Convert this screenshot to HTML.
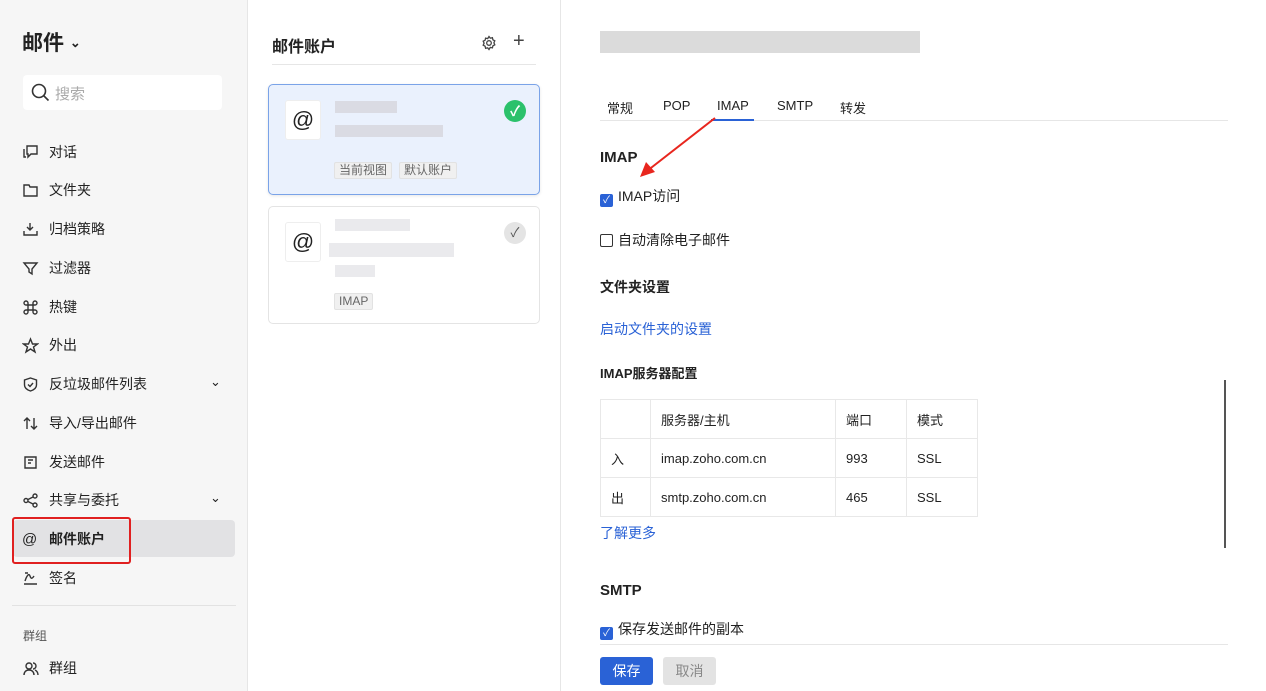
<!DOCTYPE html>
<html><head><meta charset="utf-8"><style>
*{box-sizing:border-box;margin:0;padding:0}
body{width:1266px;height:691px;overflow:hidden;background:#fff;font-family:"Liberation Sans","Noto Sans CJK SC",sans-serif;color:#222;position:relative;font-size:14px}
.abs{position:absolute}
.side{left:0;top:0;width:248px;height:691px;background:#f6f6f6;border-right:1px solid #e6e6e6}
.nav{position:absolute;left:22px;font-size:14px;color:#222;display:flex;align-items:center;gap:10px}
.nav svg{width:17px;height:17px;stroke:#333;fill:none;stroke-width:1.4}
.mid{left:248px;top:0;width:313px;height:691px;border-right:1px solid #e6e6e6;background:#fff}
.card{position:absolute;left:268px;width:272px;border:1px solid #e4e4e4;border-radius:5px;background:#fff}
.at{position:absolute;left:16px;top:15px;width:36px;height:40px;background:#fff;border:1px solid #eee;border-radius:3px;font-size:22px;text-align:center;line-height:38px}
.tag{position:absolute;font-size:12px;color:#666;background:#f0f0f0;border:1px solid #e2e2e2;padding:0 4px;height:17px;line-height:15px;border-radius:2px}
.blur{position:absolute;background:#d6d6dc;opacity:.8}
.tab{position:absolute;top:98px;font-size:13px;color:#222}
table{border-collapse:collapse;position:absolute;left:600px;top:399px;font-size:13px}
td{border:1px solid #e8e8e8;height:39px;padding-left:10px}
.cb{display:inline-block;width:13px;height:13px;border-radius:2px;vertical-align:-2px;margin-right:5px}
</style></head><body>
<div class="abs side"></div>
<div class="abs" style="left:22px;top:27px;font-size:21px;font-weight:bold">邮件 <span style="font-size:13px;vertical-align:3px">⌄</span></div>
<div class="abs" style="left:23px;top:75px;width:199px;height:35px;background:#fff;border-radius:4px"></div>
<svg class="abs" style="left:31px;top:83px" width="19" height="19" viewBox="0 0 19 19" fill="none" stroke="#333" stroke-width="1.6"><circle cx="8" cy="8" r="6.5"/><path d="M13 13l4.5 4.5"/></svg>
<div class="abs" style="left:55px;top:83px;color:#aaa;font-size:15px">搜索</div>
<div class="nav" style="top:142px"><svg viewBox="0 0 17 17"><path d="M5 2h10v8h-6l-3 3V10H5zM2 5v8h2"/></svg>对话</div>
<div class="nav" style="top:180px"><svg viewBox="0 0 17 17"><path d="M2 3h5l1 2h7v9H2z"/></svg>文件夹</div>
<div class="nav" style="top:219px"><svg viewBox="0 0 17 17"><path d="M8 2v7M5 6l3 3 3-3M2 10v4h13v-4"/></svg>归档策略</div>
<div class="nav" style="top:258px"><svg viewBox="0 0 17 17"><path d="M2 3h13l-5 6v5l-3-2V9z"/></svg>过滤器</div>
<div class="nav" style="top:297px"><svg viewBox="0 0 17 17"><path d="M6 6h5v5H6zM6 6H4a2 2 0 1 1 2-2zM11 6V4a2 2 0 1 1 2 2zM11 11h2a2 2 0 1 1-2 2zM6 11v2a2 2 0 1 1-2-2z"/></svg>热键</div>
<div class="nav" style="top:335px"><svg viewBox="0 0 17 17"><path d="M8.5 2l2 5h5l-4 3 1.5 5-4.5-3-4.5 3 1.5-5-4-3h5z"/></svg>外出</div>
<div class="nav" style="top:374px"><svg viewBox="0 0 17 17"><path d="M8.5 2l6 2v5c0 3-3 5-6 6-3-1-6-3-6-6V4z M6 8.5l2 2 3-3.5"/></svg>反垃圾邮件列表</div>
<div class="abs" style="left:210px;top:374px;font-size:13px">⌄</div>
<div class="nav" style="top:413px"><svg viewBox="0 0 17 17"><path d="M5 14V3M2 6l3-3 3 3M12 3v11M9 11l3 3 3-3"/></svg>导入/导出邮件</div>
<div class="nav" style="top:452px"><svg viewBox="0 0 17 17"><path d="M3 3h11v11H3zM6 6h5M6 9h3"/></svg>发送邮件</div>
<div class="nav" style="top:490px"><svg viewBox="0 0 17 17"><circle cx="4" cy="8.5" r="2"/><circle cx="13" cy="4" r="2"/><circle cx="13" cy="13" r="2"/><path d="M6 7.5l5-2.5M6 9.5l5 2.5"/></svg>共享与委托</div>
<div class="abs" style="left:210px;top:490px;font-size:13px">⌄</div>
<div class="abs" style="left:13px;top:520px;width:222px;height:37px;background:#e2e2e4;border-radius:4px"></div>
<div class="abs" style="left:12px;top:517px;width:119px;height:47px;border:2px solid #e02020;border-radius:3px"></div>
<div class="nav" style="top:529px;font-weight:bold"><span style="width:17px;font-size:15px;font-weight:normal">@</span>邮件账户</div>
<div class="nav" style="top:568px"><svg viewBox="0 0 17 17"><path d="M2 14h13M3 11c2-6 4-8 5-5s2 3 4 0M3 3h3"/></svg>签名</div>
<div class="abs" style="left:12px;top:605px;width:224px;border-top:1px solid #e2e2e2"></div>
<div class="abs" style="left:23px;top:627px;font-size:12px;color:#555">群组</div>
<div class="nav" style="top:658px"><svg viewBox="0 0 17 17"><circle cx="7" cy="6" r="3"/><path d="M2 15c0-3 2-5 5-5s5 2 5 5M11 3a3 3 0 0 1 0 6M13 10c2 1 3 3 3 5"/></svg>群组</div>

<div class="abs mid"></div>
<div class="abs" style="left:272px;top:33px;font-size:16px;font-weight:bold">邮件账户</div>
<svg class="abs" style="left:481px;top:35px" width="16" height="16" viewBox="0 0 16 16" fill="none" stroke="#444" stroke-width="1.3"><circle cx="8" cy="8" r="2.3"/><path d="M8 1.5l1.3 1.7 2.1-.5.5 2.1 1.9 1-.9 2 .9 2-1.9 1-.5 2.1-2.1-.5L8 14.5l-1.3-1.7-2.1.5-.5-2.1-1.9-1 .9-2-.9-2 1.9-1 .5-2.1 2.1.5z"/></svg>
<div class="abs" style="left:513px;top:30px;font-size:20px;color:#444">+</div>
<div class="abs" style="left:272px;top:64px;width:264px;border-top:1px solid #e6e6e6"></div>
<div class="card" style="top:84px;height:111px;background:#eaf1fd;border-color:#7aa3e8;box-shadow:0 1px 3px rgba(0,0,0,.1)">
<div class="at">@</div>
<div class="blur" style="left:66px;top:16px;width:62px;height:12px"></div>
<div class="blur" style="left:66px;top:40px;width:108px;height:12px"></div>
<div class="tag" style="left:65px;top:77px">当前视图</div><div class="tag" style="left:130px;top:77px">默认账户</div>
<div class="abs" style="left:235px;top:15px;width:22px;height:22px;border-radius:50%;background:#2bc16b;color:#fff;font-size:14px;text-align:center;line-height:22px;font-weight:bold">✓</div>
</div>
<div class="card" style="top:206px;height:118px">
<div class="at">@</div>
<div class="blur" style="left:66px;top:12px;width:75px;height:12px;opacity:.5"></div>
<div class="blur" style="left:60px;top:36px;width:125px;height:14px;opacity:.5"></div>
<div class="blur" style="left:66px;top:58px;width:40px;height:12px;opacity:.5"></div>
<div class="tag" style="left:65px;top:86px">IMAP</div>
<div class="abs" style="left:235px;top:15px;width:22px;height:22px;border-radius:50%;background:#e4e4e4;color:#555;font-size:13px;text-align:center;line-height:22px">✓</div>
</div>

<div class="blur" style="left:600px;top:31px;width:320px;height:22px;background:#ccc;opacity:.7"></div>
<div class="tab" style="left:607px">常规</div>
<div class="tab" style="left:663px">POP</div>
<div class="tab" style="left:717px">IMAP</div>
<div class="tab" style="left:777px">SMTP</div>
<div class="tab" style="left:840px">转发</div>
<div class="abs" style="left:600px;top:120px;width:628px;border-top:1px solid #e6e6e6"></div>
<div class="abs" style="left:711px;top:119px;width:43px;height:2px;background:#2a62d6"></div>
<svg class="abs" style="left:630px;top:115px" width="90" height="70"><path d="M85 3L17 56" stroke="#e8261e" stroke-width="2"/><path d="M10 62l6-15 9 10z" fill="#e8261e"/></svg>
<div class="abs" style="left:600px;top:149px;font-size:15px;font-weight:bold">IMAP</div>
<div class="abs" style="left:600px;top:186px"><span class="cb" style="background:#2a62d6;color:#fff;font-size:10px;text-align:center;line-height:13px">✓</span>IMAP访问</div>
<div class="abs" style="left:600px;top:230px"><span class="cb" style="border:1.5px solid #333"></span>自动清除电子邮件</div>
<div class="abs" style="left:600px;top:277px;font-weight:bold">文件夹设置</div>
<div class="abs" style="left:600px;top:319px;color:#2a62d6">启动文件夹的设置</div>
<div class="abs" style="left:600px;top:363px;font-weight:bold;font-size:13px">IMAP服务器配置</div>
<table><tr><td style="width:50px"></td><td style="width:185px">服务器/主机</td><td style="width:71px">端口</td><td style="width:71px">模式</td></tr>
<tr><td>入</td><td>imap.zoho.com.cn</td><td>993</td><td>SSL</td></tr>
<tr><td>出</td><td>smtp.zoho.com.cn</td><td>465</td><td>SSL</td></tr></table>
<div class="abs" style="left:600px;top:523px;color:#2a62d6">了解更多</div>
<div class="abs" style="left:1224px;top:380px;width:2px;height:168px;background:#555"></div>
<div class="abs" style="left:600px;top:582px;font-size:15px;font-weight:bold">SMTP</div>
<div class="abs" style="left:600px;top:619px"><span class="cb" style="background:#2a62d6;color:#fff;font-size:10px;text-align:center;line-height:13px">✓</span>保存发送邮件的副本</div>
<div class="abs" style="left:600px;top:644px;width:628px;border-top:1px solid #e6e6e6"></div>
<div class="abs" style="left:600px;top:657px;width:53px;height:28px;background:#2a62d6;color:#fff;border-radius:3px;text-align:center;line-height:28px">保存</div>
<div class="abs" style="left:663px;top:657px;width:53px;height:28px;background:#e3e3e3;color:#888;border-radius:3px;text-align:center;line-height:28px">取消</div>
</body></html>
